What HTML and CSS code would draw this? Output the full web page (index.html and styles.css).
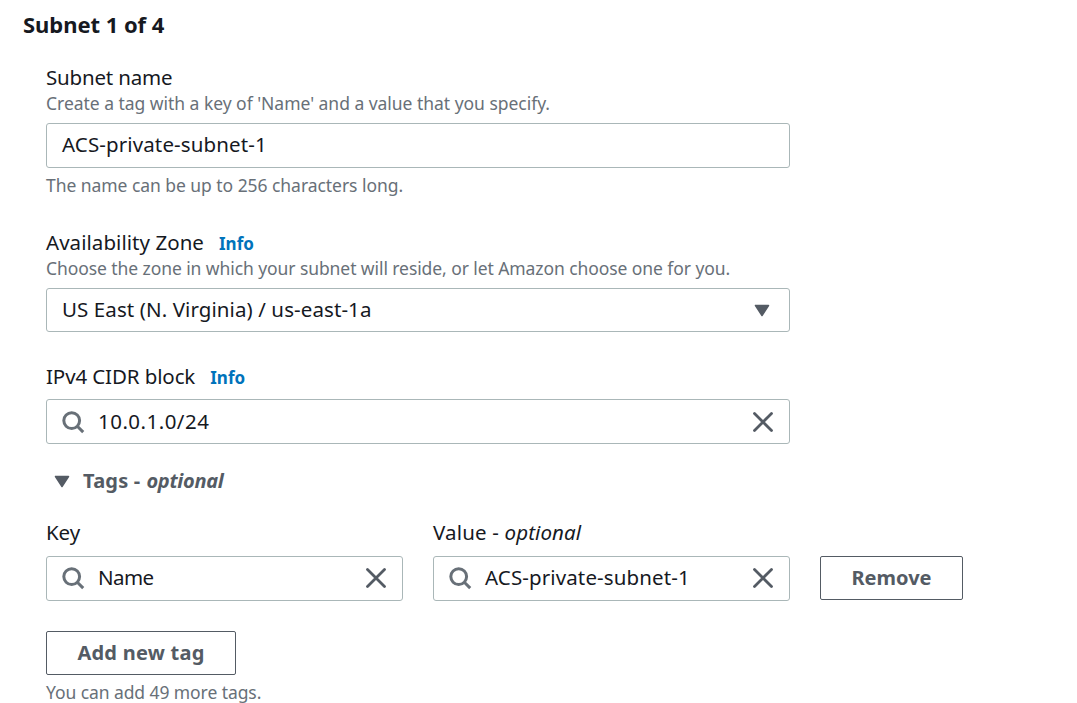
FILE: index.html
```
<!DOCTYPE html>
<html lang="en">
<head>
<meta charset="utf-8">
<title>Create subnet</title>
<link rel="stylesheet" href="styles.css">
</head>
<body>
<main class="page">
  <h2 class="title">Subnet 1 of 4</h2>
  <form class="form">
    <section class="field">
      <div class="label"><span class="name">Subnet name</span></div>
      <div class="hint"><span class="create">Create a tag with a key of 'Name' and a value that you specify.</span></div>
      <div class="input"><span class="acs">ACS-private-subnet-1</span></div>
      <div class="hint below"><span class="limit">The name can be up to 256 characters long.</span></div>
    </section>
    <section class="field">
      <div class="label"><span class="zone">Availability Zone</span><a class="info">Info</a></div>
      <div class="hint"><span class="choose">Choose the zone in which your subnet will reside, or let Amazon choose one for you.</span></div>
      <div class="input select"><span class="region">US East (N. Virginia) / us-east-1a</span>
        <svg class="caret" viewBox="0 0 16 13"><path d="M1.5 1.5h13L8 11.5z"/></svg></div>
    </section>
    <section class="field">
      <div class="label"><span class="cidr">IPv4 CIDR block</span><a class="info">Info</a></div>
      <div class="input search block">
        <svg class="glass" viewBox="0 0 24 24"><circle cx="9.7" cy="10.6" r="7.9"/><path d="M15.3 16.2l5.9 5.9"/></svg>
        <span class="ip">10.0.1.0/24</span>
        <svg class="close" viewBox="0 0 20 20"><path d="M1.5 1.5l17 17M18.5 1.5l-17 17"/></svg></div>
    </section>
    <div class="toggle">
      <svg class="caret" viewBox="0 0 16 13"><path d="M1.5 1.5h13L8 11.5z"/></svg>
      <span class="tags">Tags -</span><em class="optional-bold">optional</em></div>
    <section class="tag-row">
      <div class="tag-cell">
        <div class="label"><span class="key">Key</span></div>
        <div class="input search">
          <svg class="glass" viewBox="0 0 24 24"><circle cx="9.7" cy="10.6" r="7.9"/><path d="M15.3 16.2l5.9 5.9"/></svg>
          <span class="tagname">Name</span>
          <svg class="close" viewBox="0 0 20 20"><path d="M1.5 1.5l17 17M18.5 1.5l-17 17"/></svg></div>
      </div>
      <div class="tag-cell">
        <div class="label"><span class="value">Value -</span><em class="optional">optional</em></div>
        <div class="input search">
          <svg class="glass" viewBox="0 0 24 24"><circle cx="9.7" cy="10.6" r="7.9"/><path d="M15.3 16.2l5.9 5.9"/></svg>
          <span class="acs">ACS-private-subnet-1</span>
          <svg class="close" viewBox="0 0 20 20"><path d="M1.5 1.5l17 17M18.5 1.5l-17 17"/></svg></div>
      </div>
      <button type="button" class="button remove">Remove</button>
    </section>
    <button type="button" class="button add">Add new tag</button>
    <div class="hint below"><span class="more">You can add 49 more tags.</span></div>
  </form>
</main>
</body>
</html>
```
FILE: styles.css
```
* { box-sizing: border-box; }
body {
  margin: 0;
  background: #fff;
  color: #16191f;
  font: 20.5px/28px "Noto Sans", "Open Sans", sans-serif;
  overflow: hidden;
}
.page { height: 703px; padding: 9px 0 0 23px; overflow: hidden; }
.title { margin: 0; font-size: 22px; line-height: 30px; font-weight: 700; letter-spacing: -0.05px; }
.form { width: 744px; margin: 25px 0 0 23px; }
.field { margin-bottom: 31px; }
.label { display: flex; height: 28px; line-height: 26px; white-space: nowrap; }
.hint { height: 24px; font-size: 17.5px; line-height: 22px; color: #687078; white-space: nowrap; }
.hint.below { margin-top: 6px; }
.form > .hint.below { height: 22px; }
.info { margin-left: 15px; font-size: 17px; font-weight: 700; color: #0073bb; line-height: 30px; }
.input {
  display: flex;
  align-items: center;
  height: 45px;
  margin-top: 7px;
  padding: 0 15px 1px;
  border: 1px solid #aab7b8;
  border-radius: 3px;
  white-space: nowrap;
}
.input span { padding-bottom: 2px; }
.select { height: 44px; padding-bottom: 0; }
.block { padding: 1px 15px 0; }
.label + .search { margin-top: 8px; }
.tag-cell .label + .search { margin-top: 9px; }
.caret { width: 16px; height: 13px; fill: #545b64; stroke: #545b64; stroke-width: 1.5; stroke-linejoin: round; flex: none; }
.select .caret { margin: 0 4px 0 auto; }
.glass { width: 24px; height: 24px; margin-right: 12px; fill: none; stroke: #687078; stroke-width: 3; flex: none; }
.close { width: 20px; height: 20px; margin: 0 1px 0 auto; fill: none; stroke: #545b64; stroke-width: 2.8; stroke-linecap: round; flex: none; }
.toggle { display: flex; align-items: center; height: 28px; margin: -8px 0 24px 8px; color: #545b64; font-size: 20px; font-weight: 700; }
.toggle .caret { margin-right: 13px; }
.tag-row { display: grid; grid-template-columns: 357px 357px 143px; gap: 30px; align-items: end; width: 917px; }
.button { display: block; height: 44px; padding: 0; border: 1px solid #545b64; border-radius: 2px; background: #fff; color: #545b64; font: 700 20px/28px "Noto Sans", sans-serif; }
.remove { margin-bottom: 1px; }
.add { width: 190px; margin-top: 30px; letter-spacing: 0.25px; }

.name { letter-spacing: -0.18px; }
.create { letter-spacing: -0.03px; }
.acs { letter-spacing: 0.12px; }
.limit { letter-spacing: -0.05px; }
.zone { letter-spacing: 0.05px; }
.choose { letter-spacing: -0.08px; }
.region { letter-spacing: 0.09px; }
.cidr { letter-spacing: -0.11px; }
.ip { letter-spacing: 0.47px; }
.tags { letter-spacing: 0.2px; }
.optional-bold { margin-left: 6px; letter-spacing: -0.3px; }
.key { letter-spacing: -0.1px; }
.tagname { letter-spacing: -0.6px; }
.value { letter-spacing: 0.17px; }
.optional { margin-left: 5.5px; letter-spacing: 0.1px; }
.more { letter-spacing: -0.08px; }
```
